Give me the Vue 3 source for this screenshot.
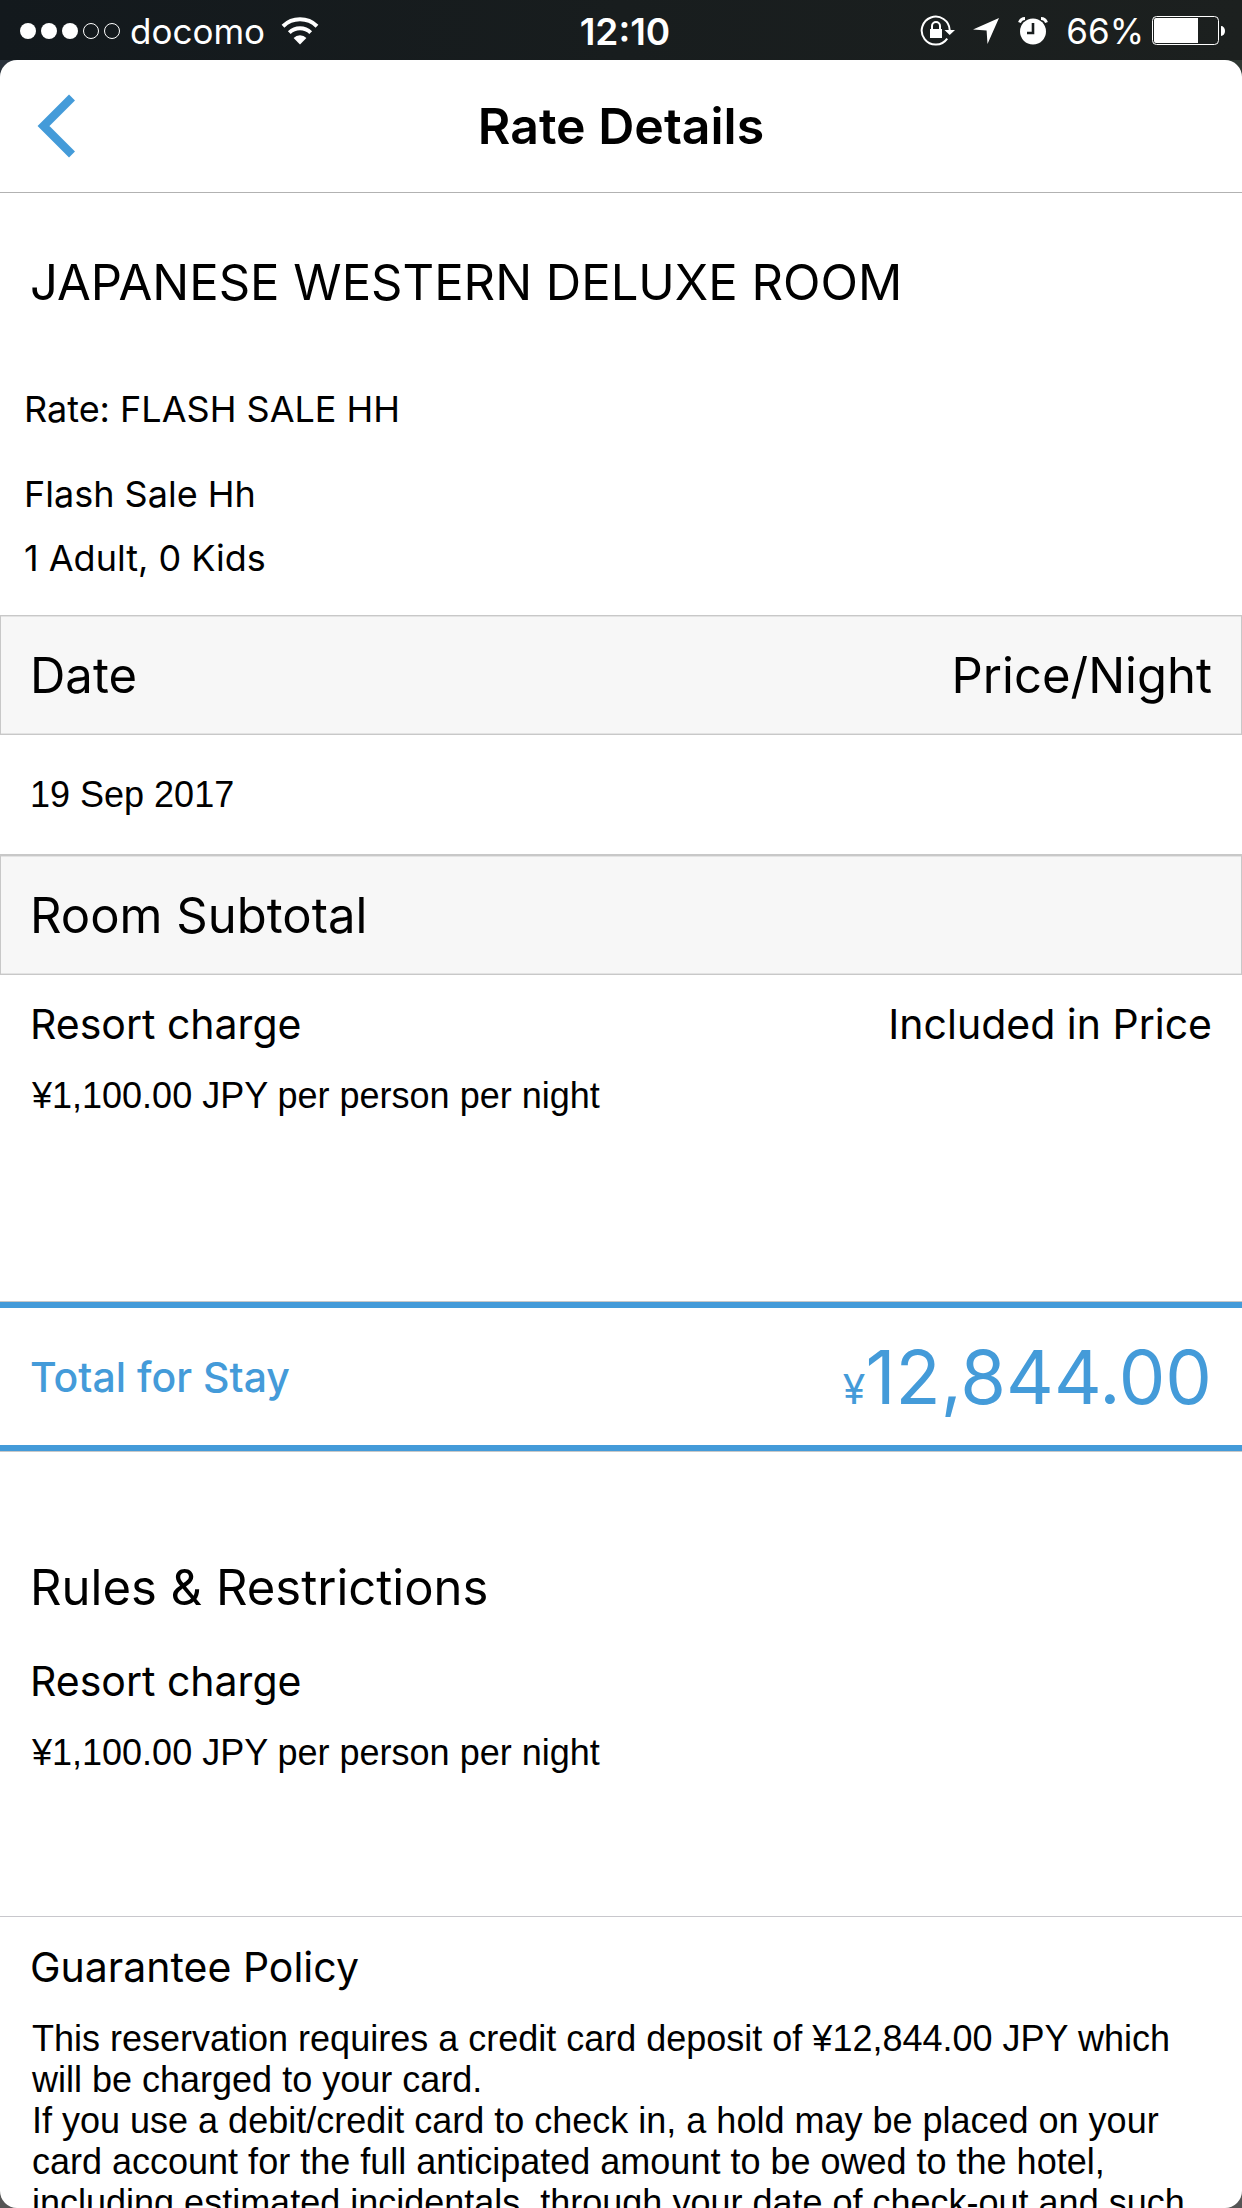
<script setup>
const room = {
  name: 'JAPANESE WESTERN DELUXE ROOM',
  rate: 'FLASH SALE HH',
  rateName: 'Flash Sale Hh',
  guests: '1 Adult, 0 Kids'
}
const nights = [{ date: '19 Sep 2017', price: '' }]
const charge = { label: 'Resort charge', value: 'Included in Price', detail: '¥1,100.00 JPY per person per night' }
const guarantee = [
  'This reservation requires a credit card deposit of ¥12,844.00 JPY which will be charged to your card.',
  'If you use a debit/credit card to check in, a hold may be placed on your card account for the full anticipated amount to be owed to the hotel, including estimated incidentals, through your date of check-out and such'
]
</script>

<template>
  <div class="screen">
    <div class="status">
      <div class="status-side">
        <svg class="signal" width="104" height="18" viewBox="0 0 104 18" aria-hidden="true">
          <g fill="#fff">
            <circle cx="10" cy="9" r="8" />
            <circle cx="31" cy="9" r="8" />
            <circle cx="52" cy="9" r="8" />
          </g>
          <g fill="none" stroke="#fff">
            <circle cx="73" cy="9" r="7.5" />
            <circle cx="94" cy="9" r="7.5" />
          </g>
        </svg>
        <span class="carrier">docomo</span>
        <svg width="38" height="28" viewBox="0 0 38 28" aria-hidden="true">
          <g fill="none" stroke="#fff" stroke-width="4">
            <path d="M2 9.2 A24.5 24.5 0 0 1 36 9.2" />
            <path d="M8.3 15.6 A15.5 15.5 0 0 1 29.7 15.6" />
          </g>
          <path d="M19 27.5 L12.6 21 A9 9 0 0 1 25.4 21 Z" fill="#fff" />
        </svg>
      </div>
      <span class="clock">12:10</span>
      <div class="status-side end">
        <svg width="36" height="32" viewBox="0 0 36 32" aria-hidden="true">
          <path d="M27.2 23.6 A14 14 0 1 1 29.7 15" fill="none" stroke="#fff" stroke-width="2" />
          <path d="M24.5 15 H35 L29.7 20 Z" fill="#fff" />
          <rect x="10" y="14" width="12" height="9" fill="#fff" />
          <path d="M12 15 V11 a4 4 0 0 1 8 0 V15" fill="none" stroke="#fff" stroke-width="2" />
        </svg>
        <svg class="arrow" width="28" height="28" viewBox="0 0 28 28" aria-hidden="true">
          <path d="M27 1 L15.5 27 L14.6 13.4 L1 12.6 Z" fill="#fff" />
        </svg>
        <svg class="alarm" width="30" height="28" viewBox="0 0 30 28" aria-hidden="true">
          <circle cx="15" cy="14.5" r="13" fill="#fff" />
          <path d="M15 6 V16 H9" fill="none" stroke="#191d1e" stroke-width="2.6" />
          <path d="M1.5 5.5 Q3 1.5 7 1.5 M28.5 5.5 Q27 1.5 23 1.5" fill="none" stroke="#fff" stroke-width="3" />
        </svg>
        <span class="percent">66%</span>
        <svg width="74" height="30" viewBox="0 0 74 30" aria-hidden="true">
          <rect x="0.5" y="0.5" width="66" height="28" rx="4" fill="none" stroke="#fff" />
          <path d="M4 2 H46 V27 H4 a2 2 0 0 1-2-2 V4 a2 2 0 0 1 2-2 Z" fill="#fff" />
          <path d="M69 10 a4 5 0 0 1 0 10 Z" fill="#fff" />
        </svg>
      </div>
    </div>

    <div class="sheet">
      <header class="nav">
        <button class="back" type="button" aria-label="Back">
          <svg width="40" height="64" viewBox="0 0 40 64" aria-hidden="true">
            <path d="M35 3.5 L6.5 32 L35 60.5" fill="none" stroke="#449bd9" stroke-width="8.4" />
          </svg>
        </button>
        <h1>Rate Details</h1>
      </header>

      <main class="content">
        <section class="summary">
          <h2 class="heading">{{ room.name }}</h2>
          <p class="rate">Rate: {{ room.rate }}</p>
          <p class="plan">{{ room.rateName }}</p>
          <p>{{ room.guests }}</p>
        </section>

        <table class="prices">
          <thead>
            <tr class="band">
              <th scope="col">Date</th>
              <th scope="col" class="right">Price/Night</th>
            </tr>
          </thead>
          <tbody>
            <tr v-for="night in nights" :key="night.date" class="night">
              <td>{{ night.date }}</td>
              <td class="right">{{ night.price }}</td>
            </tr>
          </tbody>
          <tfoot>
            <tr class="band">
              <th scope="row" colspan="2">Room Subtotal</th>
            </tr>
          </tfoot>
        </table>

        <section class="charge">
          <div class="line">
            <h3>{{ charge.label }}</h3>
            <span class="included">{{ charge.value }}</span>
          </div>
          <p class="detail">{{ charge.detail }}</p>
        </section>

        <section class="total">
          <div class="total-inner">
            <h3>Total for Stay</h3>
            <span class="amount"><span class="yen">¥</span>12,844.00</span>
          </div>
        </section>

        <section class="rules">
          <h2 class="heading">Rules &amp; Restrictions</h2>
          <h3>{{ charge.label }}</h3>
          <p class="detail">{{ charge.detail }}</p>
        </section>

        <section class="policy">
          <h3>Guarantee Policy</h3>
          <p v-for="text in guarantee" :key="text" class="detail">{{ text }}</p>
        </section>
      </main>
    </div>
  </div>
</template>

<style>
body {
  margin: 0;
  background: #555;
}
</style>

<style scoped>
.screen {
  display: flex;
  flex-direction: column;
  height: 100vh;
  overflow: hidden;
  color: #000;
  background: linear-gradient(to right, #2a323b, #2e3732) 0 60px / 100% 60px no-repeat, #555;
  font-family: Inter, "Liberation Sans", sans-serif;
}
h1, h2, h3, p {
  margin: 0;
  font-weight: 400;
}
.status {
  box-sizing: border-box;
  flex: none;
  display: flex;
  align-items: center;
  height: 60px;
  padding: 2px 16px 0 18px;
  color: #fff;
  background: linear-gradient(to right, #13191d, #181d1e 50%, #1c201f);
  font-size: 35px;
}
.status svg {
  flex: none;
}
.status-side {
  flex: 1;
  display: flex;
  align-items: center;
}
.status-side.end {
  justify-content: flex-end;
}
.carrier {
  margin: 0 16px 0 8px;
}
.clock {
  margin-left: 6px;
  font-size: 37px;
  font-weight: 600;
}
.arrow {
  margin: 0 18px 0 16px;
}
.percent {
  margin: 0 8px 0 18px;
}
.sheet {
  flex: 1;
  min-height: 0;
  display: flex;
  flex-direction: column;
  overflow: hidden;
  background: #fff;
  border-radius: 17px;
}
.nav {
  flex: none;
  display: grid;
  grid-template-columns: 1fr auto 1fr;
  align-items: center;
  height: 132px;
  border-bottom: 1px solid #b2b2b2;
}
.nav h1 {
  font-size: 50px;
  font-weight: 600;
}
.back {
  justify-self: start;
  display: flex;
  margin-left: 37px;
  padding: 0;
  border: 0;
  background: none;
}
.content {
  flex: 1;
  min-height: 0;
  overflow-y: auto;
  scrollbar-width: none;
}
.heading {
  font-size: 49px;
  line-height: 60px;
}
h3, .included {
  font-size: 41px;
  line-height: 52px;
}
.summary {
  padding: 60px 24px 35px;
  font-size: 36px;
  line-height: 44px;
}
.summary .heading {
  padding: 0 6px;
}
.rate {
  margin: 74px 0 41px;
}
.plan {
  margin-bottom: 20px;
}
.prices {
  width: 100%;
  border-collapse: separate;
  border-spacing: 0;
}
.band th {
  box-sizing: border-box;
  height: 120px;
  padding: 0 30px;
  border: solid #c8c8c8;
  border-width: 1px 0;
  background: #f7f7f7;
  box-shadow: inset 0 1px #e3e3e3, inset 0 -1px #e3e3e3;
  font-size: 49px;
  font-weight: 400;
  text-align: left;
}
.band th:first-child {
  padding-left: 29px;
  border-left-width: 1px;
}
.band th:last-child {
  padding-right: 29px;
  border-right-width: 1px;
}
.night td {
  box-sizing: border-box;
  height: 120px;
  padding: 0 30px;
  border-bottom: 1px solid #c8c8c8;
  font-family: "Liberation Sans", Arial, sans-serif;
  font-size: 36px;
}
.prices .right {
  text-align: right;
}
.charge {
  padding: 23px 30px 185px;
}
.line {
  display: flex;
  justify-content: space-between;
}
.detail {
  padding: 0 2px;
  font-family: "Liberation Sans", Arial, sans-serif;
  font-size: 36px;
  line-height: 41px;
}
h3 + .detail, .line + .detail {
  margin-top: 25px;
}
.total {
  border: solid #c8c8c8;
  border-width: 1px 0;
}
.total-inner {
  display: flex;
  align-items: center;
  justify-content: space-between;
  height: 137px;
  padding: 0 30px;
  border: solid #449bd9;
  border-width: 6px 0;
  color: #449bd9;
}
.total h3 {
  font-weight: 500;
}
.amount {
  font-size: 74px;
}
.yen {
  font-size: 41px;
}
.rules {
  padding: 106px 30px 143px;
}
.rules .heading {
  margin-bottom: 37px;
}
.policy {
  padding: 24px 30px;
  border-top: 1px solid #c8c7cc;
}
</style>
